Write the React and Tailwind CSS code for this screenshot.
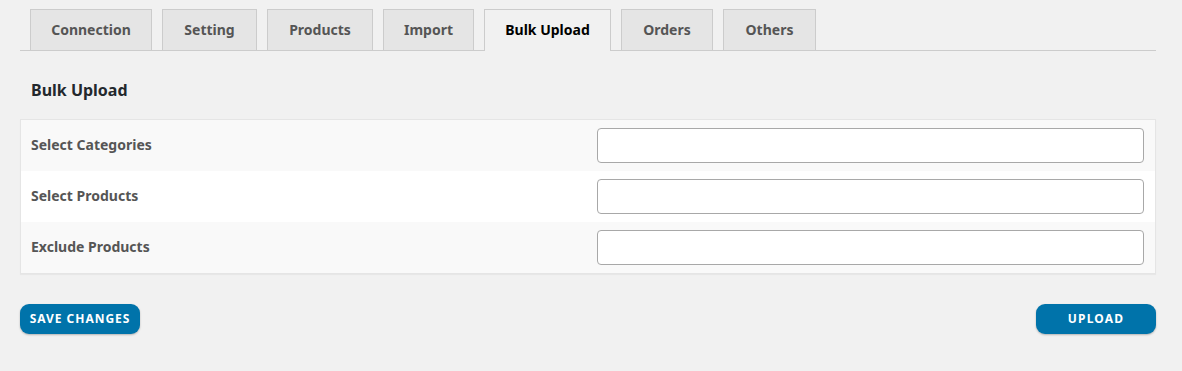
import React from 'react';

const tabs = [
  { name: 'Connection', w: 'w-[122px]' },
  { name: 'Setting', w: 'w-[95px]' },
  { name: 'Products', w: 'w-[106px]' },
  { name: 'Import', w: 'w-[91px]' },
  { name: 'Bulk Upload', w: 'w-[127px]', active: true },
  { name: 'Orders', w: 'w-[92px]' },
  { name: 'Others', w: 'w-[93px]' },
];

const rows = ['Select Categories', 'Select Products', 'Exclude Products'];

export default function App() {
  return (
    <div className="min-h-[371px] bg-[#f1f1f1] pl-5 pr-[26px] pt-[9px] font-['Noto_Sans',sans-serif]">
      {/* Tabs */}
      <div className="flex gap-[10px] border-b border-[#cccccc] pl-[10px] h-[42px] items-end">
        {tabs.map((t) =>
          t.active ? (
            <div
              key={t.name}
              className={`${t.w} h-[42px] -mb-px pb-[2px] flex items-center justify-center border border-b-0 border-[#cccccc] bg-[#f1f1f1] text-[14px] font-bold text-black`}
            >
              {t.name}
            </div>
          ) : (
            <div
              key={t.name}
              className={`${t.w} h-[41px] pb-[2px] self-start flex items-center justify-center border border-b-0 border-[#cccccc] bg-[#e5e5e5] text-[14px] font-bold text-[#555555]`}
            >
              {t.name}
            </div>
          )
        )}
      </div>

      <h2 className="pl-[11px] pt-[28px] pb-[18px] text-[16px] leading-[22px] font-bold text-[#23282d]">Bulk Upload</h2>

      {/* Form table */}
      <div className="border border-[#e5e5e5] shadow-[0_1px_1px_rgba(0,0,0,0.04)]">
        {rows.map((r, i) => (
          <div
            key={r}
            className={`flex items-center h-[51px] ${i % 2 === 0 ? 'bg-[#f9f9f9]' : 'bg-white'}`}
          >
            <div className="w-[576px] pl-[10px] pb-[2px] text-[14px] font-bold text-[#555555]">{r}</div>
            <input
              type="text"
              className="flex-1 mr-[11px] h-[35px] rounded-[4px] border border-[#a8a8a8] bg-white outline-none"
            />
          </div>
        ))}
      </div>

      {/* Actions */}
      <div className="flex justify-between mt-[30px]">
        <button className="w-[120px] h-[30px] rounded-[9px] bg-[#0073aa] text-white text-[12px] font-bold uppercase tracking-[0.08em] shadow-[0_1px_2px_rgba(0,0,0,0.25)]">
          Save Changes
        </button>
        <button className="w-[120px] h-[30px] rounded-[9px] bg-[#0073aa] text-white text-[12px] font-bold uppercase tracking-[0.1em] shadow-[0_1px_2px_rgba(0,0,0,0.25)]">
          Upload
        </button>
      </div>
    </div>
  );
}
